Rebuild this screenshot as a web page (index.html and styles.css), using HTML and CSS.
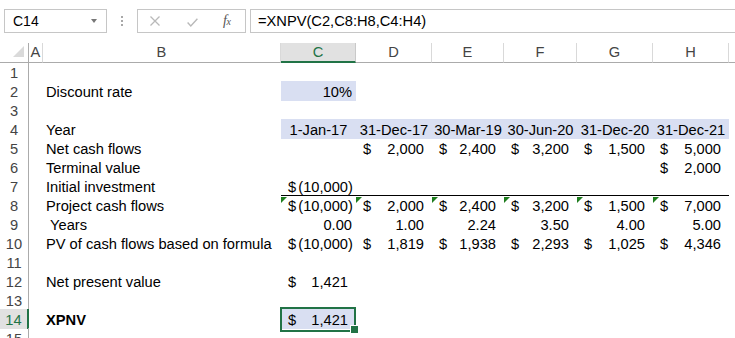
FILE: index.html
```html
<!DOCTYPE html>
<html>
<head>
<meta charset="utf-8">
<link rel="stylesheet" href="styles.css">
</head>
<body>
<div class="app">
  <div class="fbar">
    <div class="namebox"><span class="nb-text">C14</span><span class="nb-arrow"></span></div>
    <div class="grip"><i></i><i></i><i></i></div>
    <div class="btns">
      <svg class="ic-x" width="10" height="10" viewBox="0 0 10 10"><path d="M0.5 0.5L9.5 9.5M9.5 0.5L0.5 9.5" stroke="#b9b9b9" stroke-width="1.3" fill="none"/></svg>
      <svg class="ic-ok" width="11" height="9" viewBox="0 0 11 9"><path d="M0.6 4.6L3.8 7.9L10.4 0.8" stroke="#b9b9b9" stroke-width="1.4" fill="none"/></svg>
      <span class="fx">f<span class="fx-x">x</span></span>
    </div>
    <div class="formula">=XNPV(C2,C8:H8,C4:H4)</div>
  </div>

  <div class="sheet">
    <div class="row hdr">
      <div class="corner"><svg width="11" height="11" viewBox="0 0 11 11"><path d="M11 0L11 11L0 11Z" fill="#dadada"/></svg></div>
      <div class="ch">A</div>
      <div class="ch">B</div>
      <div class="ch sel">C</div>
      <div class="ch">D</div>
      <div class="ch">E</div>
      <div class="ch">F</div>
      <div class="ch">G</div>
      <div class="ch">H</div>
      <div class="ch last"></div>
    </div>

    <div class="row r1">
      <div class="rh">1</div><div></div><div></div><div></div><div></div><div></div><div></div><div></div><div></div><div></div>
    </div>
    <div class="row">
      <div class="rh">2</div><div></div><div class="txt">Discount rate</div><div class="num fill pr4">10%</div><div></div><div></div><div></div><div></div><div></div><div></div>
    </div>
    <div class="row">
      <div class="rh">3</div><div></div><div></div><div></div><div></div><div></div><div></div><div></div><div></div><div></div>
    </div>
    <div class="row">
      <div class="rh">4</div><div></div><div class="txt">Year</div>
      <div class="ctr fill">1-Jan-17</div>
      <div class="ctr fill">31-Dec-17</div>
      <div class="ctr fill">30-Mar-19</div>
      <div class="ctr fill">30-Jun-20</div>
      <div class="ctr fill">31-Dec-20</div>
      <div class="ctr fill">31-Dec-21</div>
      <div></div>
    </div>
    <div class="row">
      <div class="rh">5</div><div></div><div class="txt">Net cash flows</div><div></div>
      <div class="acc"><span>$</span><span>2,000</span></div>
      <div class="acc"><span>$</span><span>2,400</span></div>
      <div class="acc"><span>$</span><span>3,200</span></div>
      <div class="acc"><span>$</span><span>1,500</span></div>
      <div class="acc"><span>$</span><span>5,000</span></div>
      <div></div>
    </div>
    <div class="row">
      <div class="rh">6</div><div></div><div class="txt">Terminal value</div><div></div><div></div><div></div><div></div><div></div>
      <div class="acc"><span>$</span><span>2,000</span></div>
      <div></div>
    </div>
    <div class="row">
      <div class="rh">7</div><div></div><div class="txt">Initial investment</div>
      <div class="acc"><span>$</span><span class="neg">(10,000)</span></div>
      <div></div><div></div><div></div><div></div><div></div><div></div>
    </div>
    <div class="row">
      <div class="rh">8</div><div></div><div class="txt">Project cash flows</div>
      <div class="acc top err"><span>$</span><span class="neg">(10,000)</span></div>
      <div class="acc top err"><span>$</span><span>2,000</span></div>
      <div class="acc top err"><span>$</span><span>2,400</span></div>
      <div class="acc top err"><span>$</span><span>3,200</span></div>
      <div class="acc top err"><span>$</span><span>1,500</span></div>
      <div class="acc top err"><span>$</span><span>7,000</span></div>
      <div></div>
    </div>
    <div class="row">
      <div class="rh">9</div><div></div><div class="txt">&nbsp;Years</div>
      <div class="num pr4">0.00</div>
      <div class="num">1.00</div>
      <div class="num">2.24</div>
      <div class="num">3.50</div>
      <div class="num">4.00</div>
      <div class="num">5.00</div>
      <div></div>
    </div>
    <div class="row">
      <div class="rh">10</div><div></div><div class="txt">PV of cash flows based on formula</div>
      <div class="acc"><span>$</span><span class="neg">(10,000)</span></div>
      <div class="acc"><span>$</span><span>1,819</span></div>
      <div class="acc"><span>$</span><span>1,938</span></div>
      <div class="acc"><span>$</span><span>2,293</span></div>
      <div class="acc"><span>$</span><span>1,025</span></div>
      <div class="acc"><span>$</span><span>4,346</span></div>
      <div></div>
    </div>
    <div class="row">
      <div class="rh">11</div><div></div><div></div><div></div><div></div><div></div><div></div><div></div><div></div><div></div>
    </div>
    <div class="row">
      <div class="rh">12</div><div></div><div class="txt">Net present value</div>
      <div class="acc"><span>$</span><span>1,421</span></div>
      <div></div><div></div><div></div><div></div><div></div><div></div>
    </div>
    <div class="row">
      <div class="rh">13</div><div></div><div></div><div></div><div></div><div></div><div></div><div></div><div></div><div></div>
    </div>
    <div class="row">
      <div class="rh active">14</div><div></div><div class="txt bold">XPNV</div>
      <div class="acc fill selected"><span>$</span><span>1,421</span></div>
      <div></div><div></div><div></div><div></div><div></div><div></div>
    </div>
    <div class="row">
      <div class="rh">15</div><div></div><div></div><div></div><div></div><div></div><div></div><div></div><div></div><div></div>
    </div>
  </div>
</div>
</body>
</html>
```

FILE: styles.css
```css
* { box-sizing: border-box; }
html, body {
  margin: 0;
  padding: 0;
  background: #ffffff;
}
body {
  width: 735px;
  height: 338px;
  overflow: hidden;
  font-family: "Liberation Sans", Arial, sans-serif;
  color: #000;
}
.app {
  width: 735px;
  height: 338px;
  overflow: hidden;
}

/* formula bar */
.fbar {
  height: 43px;
  display: flex;
  align-items: flex-start;
  padding: 9px 0 0 4px;
}
.namebox {
  width: 103px;
  height: 24px;
  border: 1px solid #c6c6c6;
  display: flex;
  align-items: center;
  padding: 0 8px 0 8px;
  font-size: 14px;
  color: #000;
}
.nb-arrow {
  margin-left: auto;
  margin-right: 1px;
  width: 0;
  height: 0;
  border-left: 3.5px solid transparent;
  border-right: 3.5px solid transparent;
  border-top: 4px solid #777;
}
.grip {
  width: 30px;
  height: 24px;
  display: flex;
  flex-direction: column;
  align-items: center;
  justify-content: center;
  gap: 2px;
}
.grip i {
  display: block;
  width: 2px;
  height: 2px;
  background: #a8a8a8;
}
.btns {
  width: 109px;
  height: 24px;
  border: 1px solid #c6c6c6;
  display: flex;
  align-items: center;
  padding-left: 12px;
}
.ic-x { margin-top: 0px; }
.ic-ok { margin-left: 27px; margin-top: 3px; }
.fx {
  margin-left: 25px;
  font-family: "Liberation Serif", "Times New Roman", serif;
  font-style: italic;
  font-size: 14px;
  color: #555;
  letter-spacing: -0.5px;
}
.fx-x { font-size: 10px; }
.formula {
  flex: 1;
  margin-left: 4px;
  height: 24px;
  border: 1px solid #c6c6c6;
  border-right: none;
  padding-left: 7px;
  font-size: 14.67px;
  line-height: 22px;
  white-space: nowrap;
}

/* sheet */
.row {
  display: grid;
  grid-template-columns: 29px 14px 238px 75px 76px 72px 73px 76px 76px 1fr;
  height: 19px;
  font-size: 14.67px;
}
.row > div {
  padding-top: 2px;
  line-height: 18px;
  white-space: nowrap;
  position: relative;
}
.row.r1 { height: 18px; }
.row.r1 > div { padding-top: 1px; }

.row.hdr { height: 20px; }
.row.hdr > div {
  padding-top: 0;
  line-height: 19px;
  height: 20px;
  text-align: center;
  color: #444;
  border-bottom: 1px solid #ababab;
  border-right: 1px solid #d9d9d9;
}
.row.hdr > .corner {
  border-right: 1px solid #ababab;
  display: flex;
  justify-content: flex-end;
  align-items: flex-end;
  padding: 0 4px 5px 0;
}
.row.hdr > .corner svg { display: block; }
.row.hdr > .ch.sel {
  background: #e1e1e1;
  color: #217346;
  border-bottom: 2px solid #217346;
  border-right-color: #c9c9c9;
}
.row.hdr > .ch.last { border-right: none; }

.rh {
  text-align: center;
  color: #444;
  border-right: 1px solid #ababab;
}
.rh.active {
  background: #e1e1e1;
  color: #217346;
  border-right: 2px solid #217346;
}

.txt { padding-left: 3px; }
.bold { font-weight: bold; }
.num { text-align: right; padding-right: 8px; }
.num.pr4 { padding-right: 4px; }
.ctr { text-align: center; }
.fill { background: #d9dff2; }

.acc {
  display: flex;
  justify-content: space-between;
  padding-left: 7px;
  padding-right: 8px;
}
.acc .neg { margin-right: -4.9px; }

.top { border-top: 1px solid #000; padding-top: 1px !important; }
.err::before {
  content: "";
  position: absolute;
  top: 1px;
  left: 0;
  width: 0;
  height: 0;
  border-top: 6px solid #1e7d1e;
  border-right: 6px solid transparent;
}

.selected::after {
  content: "";
  position: absolute;
  top: -2px;
  left: -1px;
  right: 0;
  bottom: -3px;
  border: 2px solid #217346;
}
.selected::before {
  content: "";
  position: absolute;
  right: -3px;
  bottom: -5px;
  width: 7px;
  height: 7px;
  background: #217346;
  border: 1px solid #fff;
  z-index: 2;
}
```
